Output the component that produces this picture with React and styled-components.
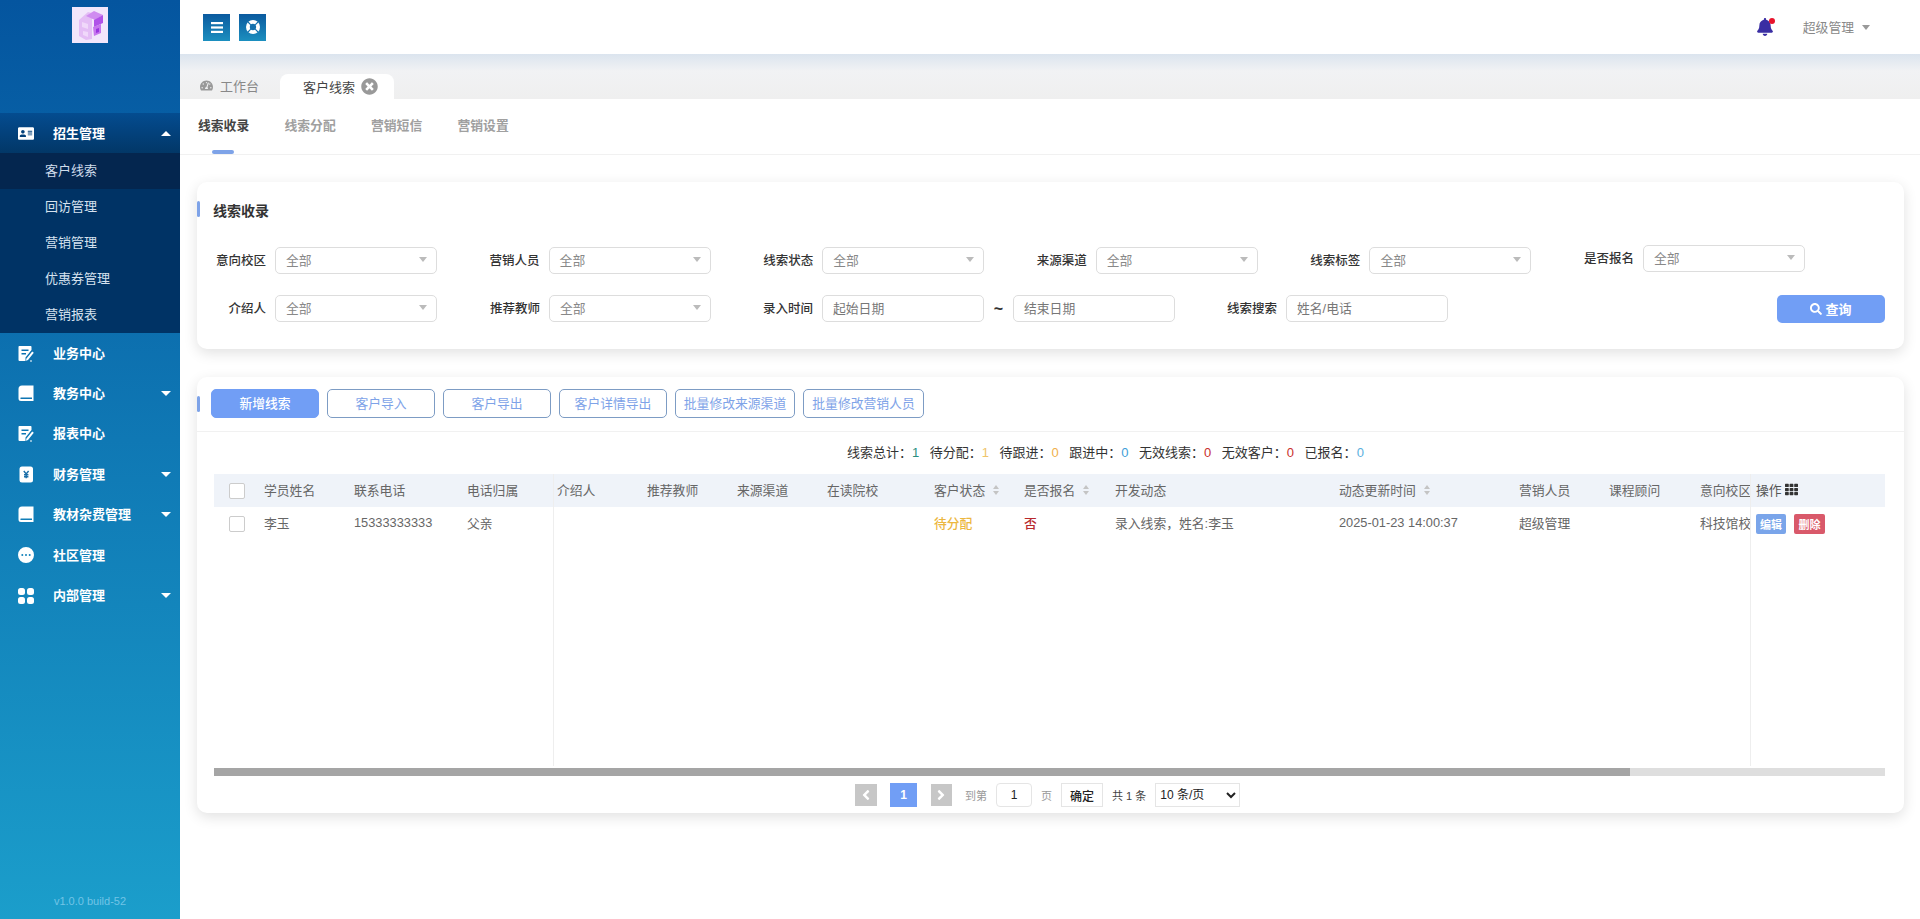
import React from 'react';
import styled, { createGlobalStyle } from 'styled-components';
import { FaAddressCard, FaAngleLeft, FaAngleRight, FaBell, FaSearch, FaTachometerAlt, FaTh, FaTimesCircle } from 'react-icons/fa';

const GlobalStyle = createGlobalStyle`
  html, body {
    margin: 0;
    padding: 0;
    background: #fff;
    font-family: "Liberation Sans", "Noto Sans CJK SC", sans-serif;
    font-size: 13px;
  }
  * { box-sizing: border-box; }
`;

const NoteIcon = () => (
  <svg width="16" height="17" viewBox="0 0 16 17">
    <path fill="#fff" fillRule="evenodd" d="M1.500 1h11c.6 0 1 .4 1 1v3l-6 7.500V16h-6a1 1 0 0 1-1-1V2c0-.6.4-1 1-1zM3.500 4.500v1.400h7V4.500zM3.500 8v1.400h4.500V8z" />
    <path fill="#fff" d="M14.200 6.500l1.600 1.300-5.800 7.200-2 .8.300-2.100zM12 15.500h2v1h-2z" />
  </svg>
);

const BookIcon = () => (
  <svg width="16" height="17" viewBox="0 0 16 17">
    <path fill="#fff" fillRule="evenodd" d="M4 .500H15.500v15.500H3A2.500 2.500 0 0 1 .500 13.500V4A3.500 3.500 0 0 1 4 .500zM3 12.600a.7.7 0 0 0 0 1.400h11v-1.400z" />
  </svg>
);

const FinanceIcon = () => (
  <svg width="16" height="17" viewBox="0 0 16 17">
    <rect x="1.500" y="0.500" width="13.500" height="16" rx="2.500" fill="#fff" />
    <path fill="none" stroke="#1a6ea8" strokeWidth="1.400" d="M5.800 5L8.200 8l2.400-3M8.200 8v4.200M6 8.800h4.400M6 10.800h4.400" />
  </svg>
);

const CommunityIcon = () => (
  <svg width="16" height="16" viewBox="0 0 16 16">
    <path fill="#fff" fillRule="evenodd" d="M8 0a8 8 0 1 1 0 16A8 8 0 0 1 8 0zM4.300 7a1 1 0 1 0 0 2 1 1 0 0 0 0-2zM8 7a1 1 0 1 0 0 2 1 1 0 0 0 0-2zM11.700 7a1 1 0 1 0 0 2 1 1 0 0 0 0-2z" />
  </svg>
);

const GridIcon = () => (
  <svg width="16" height="16" viewBox="0 0 16 16" fill="#fff">
    <rect x="0" y="0" width="7" height="7" rx="2.500" />
    <rect x="9" y="0" width="7" height="7" rx="2.500" />
    <rect x="0" y="9" width="7" height="7" rx="2.500" />
    <rect x="9" y="9" width="7" height="7" rx="2.500" />
  </svg>
);

const BarsIcon = () => (
  <svg width="12" height="11" viewBox="0 0 12 11" fill="#fff">
    <rect x="0" y="0" width="12" height="2.200" />
    <rect x="0" y="4.400" width="12" height="2.200" />
    <rect x="0" y="8.800" width="12" height="2.200" />
  </svg>
);

const RingIcon = () => (
  <svg width="14" height="14" viewBox="0 0 14 14">
    <circle cx="7" cy="7" r="7" fill="#fff" />
    <circle cx="7" cy="7" r="3.200" fill="#1470ad" />
    <path stroke="#1470ad" strokeWidth="1.100" d="M2 2l2.800 2.800M12 2L9.200 4.800M2 12l2.800-2.800M12 12L9.200 9.200" />
  </svg>
);

const LogoArt = () => (
  <svg width="36" height="36" viewBox="0 0 36 36">
    <rect width="36" height="36" fill="#f2e6fb" />
    <path fill="#e4bdf5" d="M7 13l9-8 4 1v26l-6 1-7-4z" />
    <path fill="#d08cf0" d="M14 9l8-5 9 4-8 5z" />
    <path fill="#b052e8" d="M22 13l9-5v8l-9 4z" />
    <path fill="#f0d8fa" d="M10 15l6 2v5l-6-2zM11 24l5 1v5l-5-2z" />
    <path fill="#c675ee" d="M21 20l8-3v9l-7 3z" />
    <path fill="#9a35df" d="M24 22l3-1v4l-3 1z" />
  </svg>
);

const Caret = styled.span`
  width: 0;
  height: 0;
  border-left: ${p => p.$size || 5}px solid transparent;
  border-right: ${p => p.$size || 5}px solid transparent;
  ${p => (p.$up ? 'border-bottom' : 'border-top')}: ${p => p.$h || 5}px solid ${p => p.$color || '#fff'};
`;

const Shell = styled.div`
  display: flex;
  height: 100vh;
  overflow: hidden;
`;

const Sidebar = styled.aside`
  width: 180px;
  flex: none;
  display: flex;
  flex-direction: column;
  background: linear-gradient(180deg, #04559f 0%, #1b9ecb 100%);
`;

const LogoBox = styled.div`
  height: 113px;
  padding-top: 7px;
  display: flex;
  justify-content: center;
  align-items: flex-start;
`;

const NavRow = styled.div`
  height: ${p => (p.$open ? 40 : 40.4)}px;
  display: flex;
  align-items: center;
  padding: 0 9px 0 18px;
  color: #fff;
  font-size: 13px;
  font-weight: 600;
  background: ${p => (p.$open ? 'linear-gradient(180deg, #044c90, #023767)' : 'transparent')};
`;

const NavIcon = styled.span`
  width: 16px;
  height: 17px;
  margin-right: 19px;
  display: flex;
  align-items: center;
  justify-content: center;
`;

const NavLabel = styled.span`
  flex: 1;
  padding-bottom: 2px;
`;

const SubList = styled.div`
  height: 180px;
  background: #003365;
`;

const SubItem = styled.div`
  height: 36px;
  line-height: 36px;
  padding-left: 45px;
  font-size: 13px;
  color: ${p => (p.$active ? '#cfdceb' : '#d6e2ef')};
  background: ${p => (p.$active ? '#04264f' : 'transparent')};
`;

const Version = styled.div`
  margin-top: auto;
  padding-bottom: 12px;
  text-align: center;
  font-size: 11px;
  color: #72c4e6;
`;

const Main = styled.main`
  flex: 1;
  min-width: 0;
  background: #fff;
`;

const TopBar = styled.header`
  height: 54px;
  display: flex;
  align-items: center;
  padding: 0 50px 0 23px;
  background: #fff;
`;

const SquareBtn = styled.button`
  width: 27px;
  height: 27px;
  margin-right: 9px;
  padding: 0;
  border: 0;
  color: #fff;
  display: flex;
  align-items: center;
  justify-content: center;
  background: linear-gradient(180deg, #0b5a9f, #1c8fbf);
`;

const BellWrap = styled.div`
  position: relative;
  margin-left: auto;
  width: 18px;
  height: 18px;
  color: #3a2ea3;
  font-size: 18px;
  line-height: 18px;
`;

const BellDot = styled.span`
  position: absolute;
  right: -1px;
  top: 0;
  width: 6px;
  height: 6px;
  border-radius: 50%;
  background: #e8142c;
`;

const UserName = styled.span`
  margin: 0 8px 0 29px;
  padding-bottom: 2px;
  color: #888;
  font-size: 12.800px;
`;

const TabStrip = styled.div`
  height: 45px;
  display: flex;
  align-items: flex-end;
  padding-left: 2px;
  background: linear-gradient(180deg, #dbe4ee 0%, #f1f2f4 38%, #efefef 100%);
`;

const PageTab = styled.div`
  display: flex;
  align-items: center;
  height: ${p => (p.$active ? 25 : 27)}px;
  width: ${p => (p.$active ? 114 : 98)}px;
  padding-left: ${p => (p.$active ? 23 : 18)}px;
  font-size: 13px;
  color: ${p => (p.$active ? '#444' : '#888')};
  background: ${p => (p.$active ? '#fff' : 'transparent')};
  border-radius: 8px 8px 0 0;
  gap: ${p => (p.$active ? 6 : 7)}px;
`;

const SubTabs = styled.nav`
  height: 56px;
  display: flex;
  padding-left: 18px;
  gap: 36.500px;
  border-bottom: 1px solid #f1f1f1;
`;

const SubTab = styled.div`
  position: relative;
  width: 50px;
  line-height: 54px;
  font-size: 12.800px;
  font-weight: 600;
  white-space: nowrap;
  color: ${p => (p.$active ? '#444' : '#a0a0a0')};

  &::after {
    content: '';
    display: ${p => (p.$active ? 'block' : 'none')};
    position: absolute;
    left: 14px;
    bottom: 0;
    width: 22px;
    height: 4px;
    border-radius: 2px;
    background: #7ea3e8;
  }
`;

const Content = styled.div`
  padding: 27px 16px 0 17px;
`;

const Card = styled.section`
  background: #fff;
  border-radius: 10px;
  box-shadow: 0 4px 14px rgba(0, 0, 0, 0.12);
`;

const FilterCard = styled(Card)`
  height: 167px;
  padding: 19px 19px 0 0;
`;

const ListCard = styled(Card)`
  height: 436px;
  margin-top: 28px;
`;

const Accent = styled.span`
  width: 3px;
  height: 16px;
  flex: none;
  border-radius: 2px;
  background: #7ea3e8;
`;

const SectionHead = styled.div`
  display: flex;
  align-items: flex-start;
  gap: 13px;
  height: 20px;
  margin-bottom: 26px;
`;

const SectionTitle = styled.h3`
  margin: 0;
  font-size: 14px;
  line-height: 20px;
  font-weight: 600;
  color: #333;
`;

const FormGrid = styled.div`
  display: grid;
  grid-template-columns: repeat(6, 273.600px);
`;

const FormRow = styled.div`
  display: flex;
  margin-top: 21px;
`;

const Field = styled.div`
  display: flex;
  align-items: center;
  margin-top: ${p => (p.$raised ? '-2px' : '0')};
  margin-left: ${p => p.$offset || 0}px;
  height: 27px;
`;

const FieldLabel = styled.label`
  width: 69px;
  margin-right: 9px;
  padding-bottom: 2px;
  text-align: right;
  white-space: nowrap;
  font-size: 12.500px;
  color: #333;
  font-weight: 500;
`;

const SelectBox = styled.div`
  width: 162px;
  height: 27px;
  display: flex;
  align-items: center;
  justify-content: space-between;
  padding: 0 9px 2px 10px;
  border: 1px solid #ddd;
  border-radius: 5px;
  font-size: 12.800px;
  color: #888;
`;

const TextBox = styled(SelectBox)`
  color: #777;
  padding-bottom: 3px;
`;

const Tilde = styled.span`
  width: 29px;
  text-align: center;
  font-size: 16px;
  font-weight: 700;
  color: #333;
`;

const QueryBtn = styled.button`
  margin-left: auto;
  width: 108px;
  height: 28px;
  padding: 0 0 1px;
  border: 0;
  border-radius: 5px;
  background: #719ef5;
  color: #fff;
  font: 600 13px "Liberation Sans", "Noto Sans CJK SC", sans-serif;
  display: flex;
  align-items: center;
  justify-content: center;
  gap: 3px;
`;

const Toolbar = styled.div`
  height: 55px;
  display: flex;
  align-items: center;
  padding-bottom: 1px;
  border-bottom: 1px solid #f1f1f1;
`;

const ToolButtons = styled.div`
  display: flex;
  gap: 8px;
  margin-left: 11px;
`;

const ToolBtn = styled.button`
  width: ${p => p.$w || 108}px;
  height: 29px;
  padding: 0 0 2px;
  border-radius: 5px;
  font: ${p => (p.$primary ? 500 : 400)} 12.800px "Liberation Sans", "Noto Sans CJK SC", sans-serif;
  border: 1px solid ${p => (p.$primary ? '#719ef5' : '#7d9cc4')};
  background: ${p => (p.$primary ? '#719ef5' : '#fff')};
  color: ${p => (p.$primary ? '#fff' : '#7ea3e8')};
`;

const StatsBar = styled.div`
  height: 42px;
  padding: 0 0 4px 650px;
  display: flex;
  align-items: center;
  gap: 10.500px;
  color: #333;
`;

const StatValue = styled.span`
  color: ${p => p.$color};
`;

const TableWrap = styled.div`
  display: flex;
  height: 292px;
  margin: 0 19px 0 17px;
`;

const Pane = styled.div`
  flex: ${p => (p.$grow ? 1 : 'none')};
  min-width: 0;
  overflow: hidden;
  width: ${p => (p.$w ? `${p.$w}px` : 'auto')};
  border-right: ${p => (p.$divideRight ? '1px solid #eee' : '0')};
  border-left: ${p => (p.$divideLeft ? '1px solid #eee' : '0')};
`;

const HeadRow = styled.div`
  display: flex;
  align-items: center;
  height: 33px;
  background: #eff3f9;
  color: #666;
`;

const BodyRow = styled.div`
  display: flex;
  align-items: center;
  height: 33px;
  color: #666;
`;

const Cell = styled.div`
  flex: none;
  width: ${p => p.$w}px;
  display: flex;
  align-items: center;
  gap: 8px;
  padding-bottom: 2px;
  white-space: nowrap;
  font-size: 12.800px;
  color: ${p => p.$color || 'inherit'};
  font-weight: ${p => (p.$bold ? 500 : 400)};
`;

const CheckCell = styled.div`
  flex: none;
  width: 50px;
  padding-left: 15px;
`;

const CheckBox = styled.span`
  display: block;
  width: 16px;
  height: 16px;
  background: #fff;
  border: 1px solid #ccc;
  border-radius: 2px;
`;

const SortMark = styled.span`
  display: flex;
  flex-direction: column;
  gap: 2px;
`;

const ActionCell = styled.div`
  display: flex;
  align-items: center;
  gap: 8px;
  padding-left: 5px;
`;

const HeadAction = styled(ActionCell)`
  gap: 3px;
  padding-bottom: 2px;
  font-size: 12.800px;
  color: #555;
`;

const MiniBtn = styled.button`
  width: ${p => p.$w}px;
  height: 20px;
  padding: 0;
  border: 0;
  border-radius: 2px;
  color: #fff;
  font: 600 11px "Liberation Sans", "Noto Sans CJK SC", sans-serif;
  background: ${p => p.$bg};
`;

const ScrollTrack = styled.div`
  height: 8px;
  margin: 2px 19px 0 17px;
  background: #dedede;
`;

const ScrollThumb = styled.div`
  width: 84.750%;
  height: 100%;
  background: #a5a5a5;
`;

const Pager = styled.div`
  display: flex;
  align-items: center;
  height: 24px;
  margin-top: 7px;
  padding-left: 658px;
  gap: 9px;
  font-size: 12px;
  color: #444;
`;

const PagerNav = styled.div`
  display: flex;
  align-items: center;
  gap: 13.500px;
  margin-right: 4px;
`;

const PageArrow = styled.span`
  width: 21.500px;
  height: 22px;
  background: #c7c7c7;
  color: #fff;
  display: flex;
  align-items: center;
  justify-content: center;
`;

const PageNum = styled.span`
  width: 27px;
  height: 24px;
  background: #719ef5;
  color: #fff;
  font-weight: 700;
  display: flex;
  align-items: center;
  justify-content: center;
`;

const PagerHint = styled.span`
  font-size: 11px;
  color: ${p => (p.$dark ? '#444' : '#999')};
`;

const PageInput = styled.span`
  width: 36px;
  height: 24px;
  border: 1px solid #e5e5e5;
  border-radius: 4px;
  color: #222;
  display: flex;
  align-items: center;
  justify-content: center;
`;

const ConfirmBtn = styled.button`
  width: 42px;
  height: 24px;
  padding: 0;
  background: #fff;
  border: 1px solid #e5e5e5;
  color: #222;
  font: 500 12px "Liberation Sans", "Noto Sans CJK SC", sans-serif;
`;

const SizeSelect = styled.select`
  width: 85px;
  height: 24px;
  background: #fff;
  border: 1px solid #e5e5e5;
  color: #222;
  font: 12px "Liberation Sans", "Noto Sans CJK SC", sans-serif;
`;

const navAfter = [
  { label: '业务中心', icon: <NoteIcon /> },
  { label: '教务中心', icon: <BookIcon />, caret: true },
  { label: '报表中心', icon: <NoteIcon /> },
  { label: '财务管理', icon: <FinanceIcon />, caret: true },
  { label: '教材杂费管理', icon: <BookIcon />, caret: true },
  { label: '社区管理', icon: <CommunityIcon /> },
  { label: '内部管理', icon: <GridIcon />, caret: true },
];

const subItems = ['客户线索', '回访管理', '营销管理', '优惠券管理', '营销报表'];

const stats = [
  ['线索总计', 1, '#2a8f7f'],
  ['待分配', 1, '#efc46a'],
  ['待跟进', 0, '#f0b04a'],
  ['跟进中', 0, '#3ea0d8'],
  ['无效线索', 0, '#c9302c'],
  ['无效客户', 0, '#c9302c'],
  ['已报名', 0, '#5bb0de'],
];

const leftCols = [
  { w: 90, title: '学员姓名', value: '李玉' },
  { w: 113, title: '联系电话', value: '15333333333' },
  { w: 85, title: '电话归属', value: '父亲' },
];

const midCols = [
  { w: 90, title: '介绍人' },
  { w: 90, title: '推荐教师' },
  { w: 90, title: '来源渠道' },
  { w: 107, title: '在读院校' },
  { w: 90, title: '客户状态', sort: true, value: '待分配', color: '#ecb73f', bold: true },
  { w: 91, title: '是否报名', sort: true, value: '否', color: '#b8282c', bold: true },
  { w: 224, title: '开发动态', value: '录入线索，姓名:李玉' },
  { w: 180, title: '动态更新时间', sort: true, value: '2025-01-23 14:00:37' },
  { w: 90, title: '营销人员', value: '超级管理' },
  { w: 91, title: '课程顾问' },
  { w: 50, title: '意向校区', value: '科技馆校' },
];

const FilterSelect = ({ label, raised, offset }) => (
  <Field $raised={raised} $offset={offset}>
    <FieldLabel>{label}</FieldLabel>
    <SelectBox>
      全部
      <Caret $size={4.5} $h={5} $color="#bbb" />
    </SelectBox>
  </Field>
);

export default function App() {
  return (
    <Shell>
      <GlobalStyle />
      <Sidebar>
        <LogoBox><LogoArt /></LogoBox>
        <NavRow $open>
          <NavIcon><FaAddressCard size={17} /></NavIcon>
          <NavLabel>招生管理</NavLabel>
          <Caret $up />
        </NavRow>
        <SubList>
          {subItems.map((s, i) => <SubItem key={s} $active={i === 0}>{s}</SubItem>)}
        </SubList>
        {navAfter.map(n => (
          <NavRow key={n.label}>
            <NavIcon>{n.icon}</NavIcon>
            <NavLabel>{n.label}</NavLabel>
            {n.caret && <Caret />}
          </NavRow>
        ))}
        <Version>v1.0.0 build-52</Version>
      </Sidebar>
      <Main>
        <TopBar>
          <SquareBtn><BarsIcon /></SquareBtn>
          <SquareBtn><RingIcon /></SquareBtn>
          <BellWrap>
            <FaBell />
            <BellDot />
          </BellWrap>
          <UserName>超级管理</UserName>
          <Caret $size={4.5} $h={5} $color="#999" />
        </TopBar>
        <TabStrip>
          <PageTab>
            <FaTachometerAlt size={13} color="#999" />
            工作台
          </PageTab>
          <PageTab $active>
            客户线索
            <FaTimesCircle size={17} color="#999" />
          </PageTab>
        </TabStrip>
        <SubTabs>
          <SubTab $active>线索收录</SubTab>
          <SubTab>线索分配</SubTab>
          <SubTab>营销短信</SubTab>
          <SubTab>营销设置</SubTab>
        </SubTabs>
        <Content>
          <FilterCard>
            <SectionHead>
              <Accent />
              <SectionTitle>线索收录</SectionTitle>
            </SectionHead>
            <FormGrid>
              <FilterSelect label="意向校区" />
              <FilterSelect label="营销人员" />
              <FilterSelect label="线索状态" />
              <FilterSelect label="来源渠道" />
              <FilterSelect label="线索标签" />
              <FilterSelect label="是否报名" raised />
            </FormGrid>
            <FormRow>
              <FilterSelect label="介绍人" />
              <FilterSelect label="推荐教师" offset={34} />
              <Field $offset={33}>
                <FieldLabel>录入时间</FieldLabel>
                <TextBox>起始日期</TextBox>
                <Tilde>~</Tilde>
                <TextBox>结束日期</TextBox>
              </Field>
              <Field $offset={33}>
                <FieldLabel>线索搜索</FieldLabel>
                <TextBox>姓名/电话</TextBox>
              </Field>
              <QueryBtn><FaSearch size={12} />查询</QueryBtn>
            </FormRow>
          </FilterCard>
          <ListCard>
            <Toolbar>
              <Accent />
              <ToolButtons>
                <ToolBtn $primary>新增线索</ToolBtn>
                <ToolBtn>客户导入</ToolBtn>
                <ToolBtn>客户导出</ToolBtn>
                <ToolBtn>客户详情导出</ToolBtn>
                <ToolBtn $w={120}>批量修改来源渠道</ToolBtn>
                <ToolBtn $w={121}>批量修改营销人员</ToolBtn>
              </ToolButtons>
            </Toolbar>
            <StatsBar>
              {stats.map(([label, value, color]) => (
                <span key={label}>{label}：<StatValue $color={color}>{value}</StatValue></span>
              ))}
            </StatsBar>
            <TableWrap>
              <Pane $w={340} $divideRight>
                <HeadRow>
                  <CheckCell><CheckBox /></CheckCell>
                  {leftCols.map(c => <Cell key={c.title} $w={c.w}>{c.title}</Cell>)}
                </HeadRow>
                <BodyRow>
                  <CheckCell><CheckBox /></CheckCell>
                  {leftCols.map(c => <Cell key={c.title} $w={c.w}>{c.value}</Cell>)}
                </BodyRow>
              </Pane>
              <Pane $grow>
                <HeadRow>
                  <Cell $w={3} />
                  {midCols.map(c => (
                    <Cell key={c.title} $w={c.w}>
                      {c.title}
                      {c.sort && (
                        <SortMark>
                          <Caret $up $size={3.5} $h={4} $color="#c4c4c4" />
                          <Caret $size={3.5} $h={4} $color="#c4c4c4" />
                        </SortMark>
                      )}
                    </Cell>
                  ))}
                </HeadRow>
                <BodyRow>
                  <Cell $w={3} />
                  {midCols.map(c => (
                    <Cell key={c.title} $w={c.w} $color={c.color} $bold={c.bold}>{c.value}</Cell>
                  ))}
                </BodyRow>
              </Pane>
              <Pane $w={135} $divideLeft>
                <HeadRow>
                  <HeadAction>操作 <FaTh size={13} color="#333" /></HeadAction>
                </HeadRow>
                <BodyRow>
                  <ActionCell>
                    <MiniBtn $w={30} $bg="#7aa5ea">编辑</MiniBtn>
                    <MiniBtn $w={31} $bg="#d9596a">删除</MiniBtn>
                  </ActionCell>
                </BodyRow>
              </Pane>
            </TableWrap>
            <ScrollTrack><ScrollThumb /></ScrollTrack>
            <Pager>
              <PagerNav>
                <PageArrow><FaAngleLeft size={16} /></PageArrow>
                <PageNum>1</PageNum>
                <PageArrow><FaAngleRight size={16} /></PageArrow>
              </PagerNav>
              <PagerHint>到第</PagerHint>
              <PageInput>1</PageInput>
              <PagerHint>页</PagerHint>
              <ConfirmBtn>确定</ConfirmBtn>
              <PagerHint $dark>共 1 条</PagerHint>
              <SizeSelect defaultValue="10">
                <option value="10">10 条/页</option>
              </SizeSelect>
            </Pager>
          </ListCard>
        </Content>
      </Main>
    </Shell>
  );
}
